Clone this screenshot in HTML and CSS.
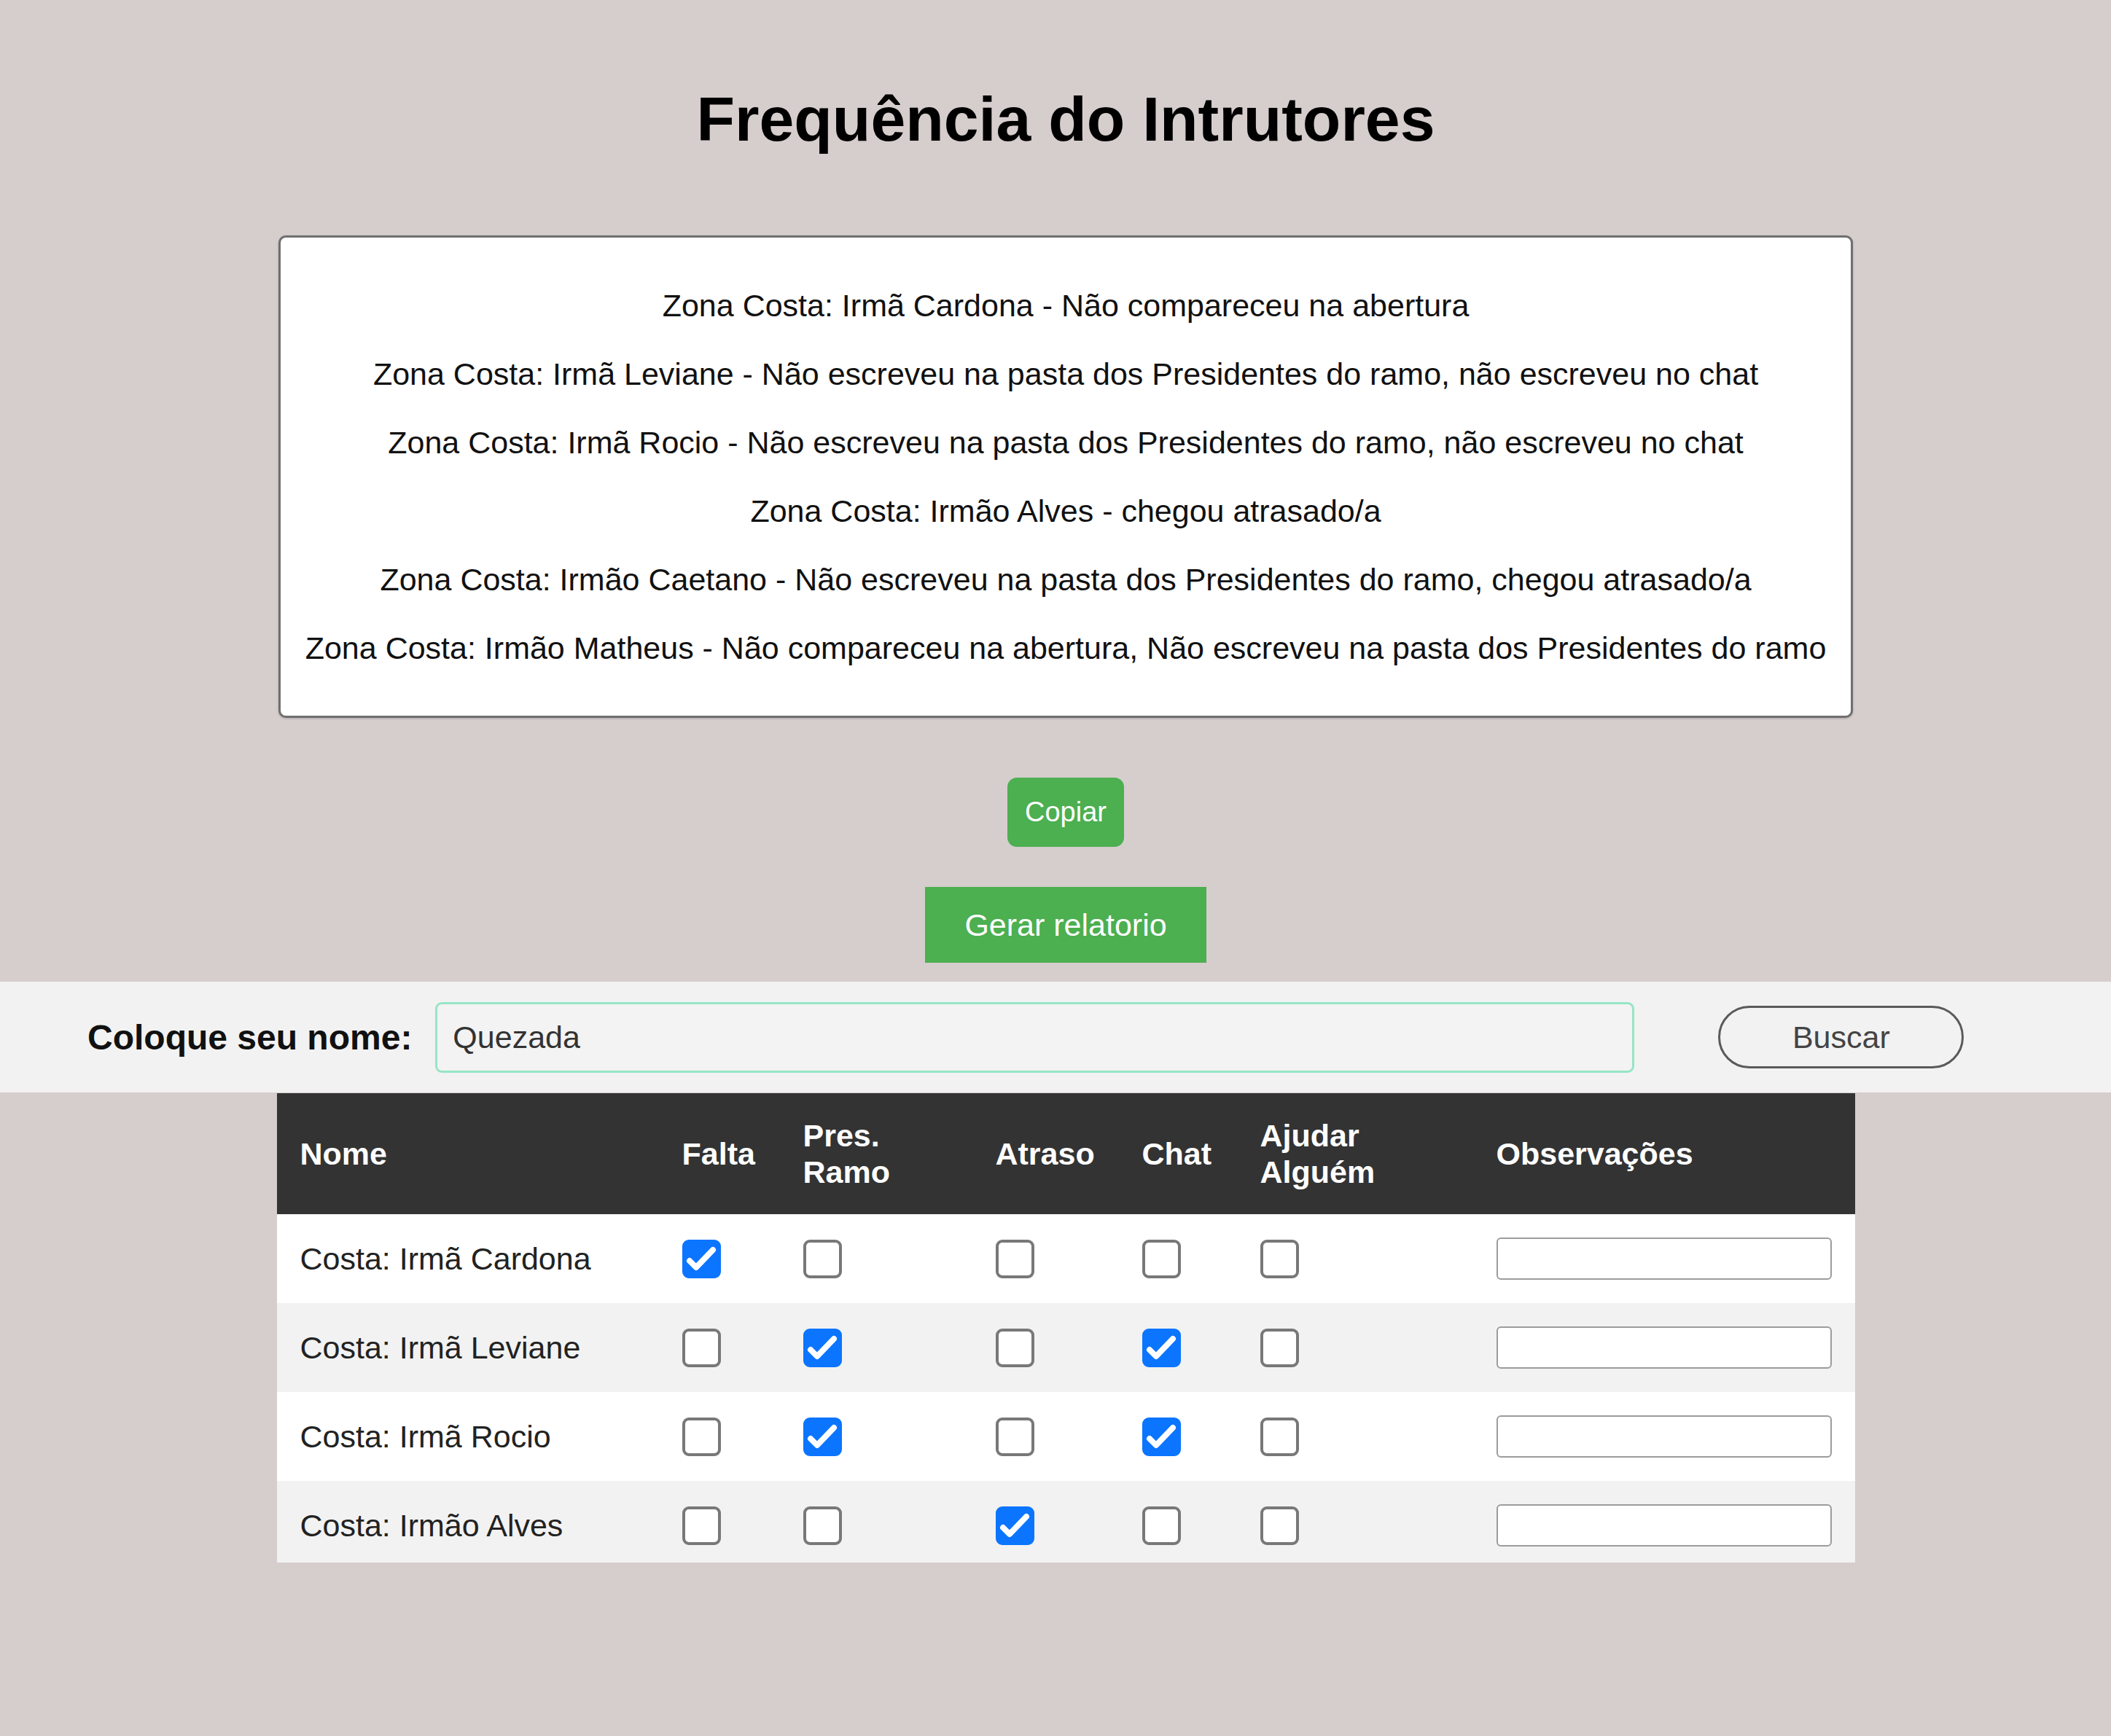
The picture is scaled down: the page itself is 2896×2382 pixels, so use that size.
FILE: index.html
```html
<!DOCTYPE html>
<html lang="pt-BR">
<head>
<meta charset="utf-8">
<title>Frequência do Intrutores</title>
<link rel="stylesheet" href="styles.css">
</head>
<body>
<main class="top">
  <h1 class="title">Frequência do Intrutores</h1>
  <div class="report">
    <p>Zona Costa: Irmã Cardona - Não compareceu na abertura</p>
    <p>Zona Costa: Irmã Leviane - Não escreveu na pasta dos Presidentes do ramo, não escreveu no chat</p>
    <p>Zona Costa: Irmã Rocio - Não escreveu na pasta dos Presidentes do ramo, não escreveu no chat</p>
    <p>Zona Costa: Irmão Alves - chegou atrasado/a</p>
    <p>Zona Costa: Irmão Caetano - Não escreveu na pasta dos Presidentes do ramo, chegou atrasado/a</p>
    <p>Zona Costa: Irmão Matheus - Não compareceu na abertura, Não escreveu na pasta dos Presidentes do ramo</p>
  </div>
  <button class="btn-copy" type="button">Copiar</button>
  <button class="btn-report" type="button">Gerar relatorio</button>
</main>

<section class="search">
  <label class="search-label" for="nome">Coloque seu nome:</label>
  <input class="search-input" id="nome" type="text" value="Quezada">
  <button class="btn-search" type="button">Buscar</button>
</section>

<div class="table-area">
  <div class="table-wrap">
    <table class="freq">
      <colgroup>
        <col class="c-nome"><col class="c-falta"><col class="c-pres"><col class="c-atraso"><col class="c-chat"><col class="c-ajudar"><col class="c-obs">
      </colgroup>
      <thead>
        <tr>
          <th>Nome</th>
          <th>Falta</th>
          <th>Pres.<br>Ramo</th>
          <th>Atraso</th>
          <th>Chat</th>
          <th>Ajudar<br>Alguém</th>
          <th>Observações</th>
        </tr>
      </thead>
      <tbody>
        <tr>
          <td>Costa: Irmã Cardona</td>
          <td><label class="cb"><input type="checkbox" checked><svg viewBox="0 0 53 53"><path d="M10 29 L19 38 L42 14"/></svg></label></td>
          <td><label class="cb"><input type="checkbox"><svg viewBox="0 0 53 53"><path d="M10 29 L19 38 L42 14"/></svg></label></td>
          <td><label class="cb"><input type="checkbox"><svg viewBox="0 0 53 53"><path d="M10 29 L19 38 L42 14"/></svg></label></td>
          <td><label class="cb"><input type="checkbox"><svg viewBox="0 0 53 53"><path d="M10 29 L19 38 L42 14"/></svg></label></td>
          <td><label class="cb"><input type="checkbox"><svg viewBox="0 0 53 53"><path d="M10 29 L19 38 L42 14"/></svg></label></td>
          <td><input class="obs" type="text"></td>
        </tr>
        <tr>
          <td>Costa: Irmã Leviane</td>
          <td><label class="cb"><input type="checkbox"><svg viewBox="0 0 53 53"><path d="M10 29 L19 38 L42 14"/></svg></label></td>
          <td><label class="cb"><input type="checkbox" checked><svg viewBox="0 0 53 53"><path d="M10 29 L19 38 L42 14"/></svg></label></td>
          <td><label class="cb"><input type="checkbox"><svg viewBox="0 0 53 53"><path d="M10 29 L19 38 L42 14"/></svg></label></td>
          <td><label class="cb"><input type="checkbox" checked><svg viewBox="0 0 53 53"><path d="M10 29 L19 38 L42 14"/></svg></label></td>
          <td><label class="cb"><input type="checkbox"><svg viewBox="0 0 53 53"><path d="M10 29 L19 38 L42 14"/></svg></label></td>
          <td><input class="obs" type="text"></td>
        </tr>
        <tr>
          <td>Costa: Irmã Rocio</td>
          <td><label class="cb"><input type="checkbox"><svg viewBox="0 0 53 53"><path d="M10 29 L19 38 L42 14"/></svg></label></td>
          <td><label class="cb"><input type="checkbox" checked><svg viewBox="0 0 53 53"><path d="M10 29 L19 38 L42 14"/></svg></label></td>
          <td><label class="cb"><input type="checkbox"><svg viewBox="0 0 53 53"><path d="M10 29 L19 38 L42 14"/></svg></label></td>
          <td><label class="cb"><input type="checkbox" checked><svg viewBox="0 0 53 53"><path d="M10 29 L19 38 L42 14"/></svg></label></td>
          <td><label class="cb"><input type="checkbox"><svg viewBox="0 0 53 53"><path d="M10 29 L19 38 L42 14"/></svg></label></td>
          <td><input class="obs" type="text"></td>
        </tr>
        <tr>
          <td>Costa: Irmão Alves</td>
          <td><label class="cb"><input type="checkbox"><svg viewBox="0 0 53 53"><path d="M10 29 L19 38 L42 14"/></svg></label></td>
          <td><label class="cb"><input type="checkbox"><svg viewBox="0 0 53 53"><path d="M10 29 L19 38 L42 14"/></svg></label></td>
          <td><label class="cb"><input type="checkbox" checked><svg viewBox="0 0 53 53"><path d="M10 29 L19 38 L42 14"/></svg></label></td>
          <td><label class="cb"><input type="checkbox"><svg viewBox="0 0 53 53"><path d="M10 29 L19 38 L42 14"/></svg></label></td>
          <td><label class="cb"><input type="checkbox"><svg viewBox="0 0 53 53"><path d="M10 29 L19 38 L42 14"/></svg></label></td>
          <td><input class="obs" type="text"></td>
        </tr>
      </tbody>
    </table>
  </div>
</div>
</body>
</html>
```

FILE: styles.css
```css
html {
  background: #d6cdcd;
}

body {
  margin: 0;
  min-height: 2382px;
  background: #d6cdcd;
  color: #111;
  font-family: "Liberation Sans", Arial, sans-serif;
}

/* ---------- top area ---------- */
.top {
  display: flex;
  flex-direction: column;
  align-items: center;
  padding-left: 28px;
}

.title {
  margin: 114px 0 110px;
  font-size: 86px;
  line-height: 99px;
  font-weight: bold;
  color: #000;
}

.report {
  box-sizing: border-box;
  width: 2160px;
  padding: 24px;
  background: #fff;
  border: 3px solid #6f6f6f;
  border-radius: 10px;
  box-shadow: 0 1px 3px rgba(0, 0, 0, 0.2);
  text-align: center;
}

.report p {
  margin: 44px 0;
  font-size: 43px;
  line-height: 50px;
  white-space: nowrap;
  color: #111;
}

.btn-copy {
  margin-top: 82px;
  padding: 26px 24px;
  border: 0;
  border-radius: 13px;
  background: #4caf50;
  color: #fff;
  font-family: "Liberation Sans", Arial, sans-serif;
  font-size: 38px;
  line-height: 43px;
}

.btn-report {
  margin-top: 55px;
  padding: 27px 54px;
  border: 0;
  border-radius: 0;
  background: #4caf50;
  color: #fff;
  font-family: "Liberation Sans", Arial, sans-serif;
  font-size: 43px;
  line-height: 50px;
}

/* ---------- search band ---------- */
.search {
  display: flex;
  align-items: center;
  height: 152px;
  margin-top: 26px;
  padding-left: 120px;
  background: #f2f2f2;
}

.search-label {
  margin-right: 32px;
  font-size: 48px;
  font-weight: bold;
  white-space: nowrap;
  color: #111;
}

.search-input {
  box-sizing: border-box;
  width: 1645px;
  height: 97px;
  margin: 0 115px 0 0;
  padding: 0 21px;
  border: 3px solid #96e6c6;
  border-radius: 9px;
  background: #f3f3f3;
  color: #333;
  font-family: "Liberation Sans", Arial, sans-serif;
  font-size: 43px;
  outline: none;
}

.btn-search {
  box-sizing: border-box;
  width: 337px;
  height: 86px;
  padding: 0;
  border: 3px solid #5a5a5a;
  border-radius: 43px;
  background: transparent;
  color: #444;
  font-family: "Liberation Sans", Arial, sans-serif;
  font-size: 43px;
}

/* ---------- table ---------- */
.table-area {
  padding-left: 28px;
}

.table-wrap {
  width: 2165px;
  height: 644px;
  margin: 1px auto 0;
  overflow: hidden;
}

.freq {
  width: 2165px;
  table-layout: fixed;
  border-collapse: collapse;
  font-size: 43px;
  line-height: 50px;
}

.c-nome { width: 524px; }
.c-falta { width: 166px; }
.c-pres { width: 264px; }
.c-atraso { width: 201px; }
.c-chat { width: 162px; }
.c-ajudar { width: 324px; }
.c-obs { width: 524px; }

.freq th {
  padding: 33px 32px;
  background: #333;
  color: #fff;
  font-weight: bold;
  text-align: left;
  vertical-align: middle;
}

.freq td {
  height: 58px;
  padding: 32px;
  background: #fff;
  color: #222;
  vertical-align: middle;
  white-space: nowrap;
}

.freq tbody tr:nth-child(even) td {
  background: #f2f2f2;
}

.cb {
  position: relative;
  display: block;
  width: 53px;
  height: 53px;
}

.cb input {
  -webkit-appearance: none;
  appearance: none;
  box-sizing: border-box;
  display: block;
  width: 53px;
  height: 53px;
  margin: 0;
  border: 4px solid #787878;
  border-radius: 9px;
  background: #fff;
}

.cb input:checked {
  background: #0b75ff;
  border-color: #0b75ff;
}

.cb svg {
  position: absolute;
  left: 0;
  top: 0;
  width: 53px;
  height: 53px;
  pointer-events: none;
  fill: none;
  stroke: #fff;
  stroke-width: 8;
  stroke-linecap: round;
  stroke-linejoin: round;
}

.cb input:not(:checked) + svg {
  display: none;
}

.obs {
  box-sizing: border-box;
  display: block;
  width: 100%;
  height: 58px;
  margin: 0;
  border: 2px solid #9c9c9c;
  border-radius: 6px;
  background: #fff;
}
```
